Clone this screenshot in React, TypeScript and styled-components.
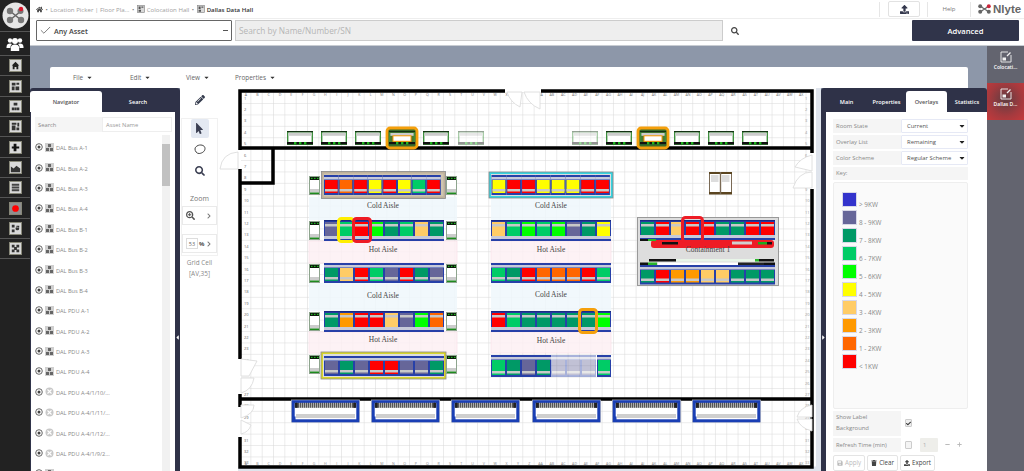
import React from "react";
import styled, { createGlobalStyle } from "styled-components";
import { FaCaretDown, FaCheck, FaHome, FaMousePointer, FaPencilAlt, FaSearch, FaSearchPlus, FaTrash, FaUpload, FaChevronRight, FaPlus, FaMinus, FaCaretLeft, FaCaretRight, FaSave } from "react-icons/fa";
import { Check } from "lucide-react";

const GlobalStyle = createGlobalStyle`
  html, body { margin: 0; padding: 0; background: #fff; }
  * { box-sizing: border-box; }
  body { font-family: "Open Sans", "Liberation Sans", sans-serif; }
`;

const Page = styled.div`
  display: flex;
  width: 1024px;
  height: 471px;
  overflow: hidden;
`;

/* left black strip */
const Sidebar = styled.nav`
  width: 30px;
  flex: none;
  background: #222222;
  display: flex;
  flex-direction: column;
`;
const LogoCell = styled.div`
  height: 32px;
  display: flex;
  align-items: center;
  justify-content: center;
  border-bottom: 1px solid #555;
`;
const PeopleCell = styled.div`
  height: 24px;
  display: flex;
  align-items: center;
  justify-content: center;
  border-bottom: 1px solid #555;
`;
const SideCell = styled.div`
  height: 20.35px;
  display: flex;
  align-items: center;
  justify-content: center;
  border-bottom: 1px solid #555;
`;

const Main = styled.div`
  flex: 1;
  min-width: 0;
  display: flex;
  flex-direction: column;
`;

/* header */
const CrumbBar = styled.div`
  height: 19px;
  display: flex;
  align-items: center;
  padding-left: 6px;
  border-bottom: 1px solid #eee;
  font-size: 6.1px;
  color: #9a9a9a;
`;
const Crumb = styled.span<{ $current?: boolean }>`
  display: inline-flex;
  align-items: center;
  gap: 2px;
  color: ${(p) => (p.$current ? "#333" : "#a0a0a0")};
  font-weight: ${(p) => (p.$current ? 600 : 400)};
`;
const CrumbDot = styled.span`
  margin: 0 2.5px;
  color: #777;
`;
const CrumbRight = styled.div`
  margin-left: auto;
  display: flex;
  align-items: center;
  height: 18px;
`;
const Divider = styled.div`
  width: 1px;
  height: 15px;
  background: #e6e6e6;
`;
const UploadButton = styled.div`
  width: 32px;
  height: 16px;
  margin: 0 7px 0 8px;
  border: 1px solid #e2e2e2;
  border-radius: 2px;
  display: flex;
  align-items: center;
  justify-content: center;
  color: #33374c;
`;
const HelpLink = styled.div`
  width: 42px;
  text-align: center;
  font-size: 6px;
  color: #777;
`;
const NlyteLogo = styled.div`
  width: 53px;
  padding-left: 7px;
  display: flex;
  align-items: center;
  gap: 2px;
  font-family: "Liberation Sans Narrow", "Liberation Sans", sans-serif;
  font-weight: 700;
  font-size: 11.5px;
  color: #666;
`;

const SearchBar = styled.div`
  height: 27px;
  display: flex;
  align-items: center;
  padding: 0 5px 3px 6px;
  border-bottom: 1px solid #c8ccd2;
`;
const AssetBox = styled.div`
  width: 196px;
  height: 21px;
  border: 1px solid #666;
  border-radius: 1px;
  display: flex;
  align-items: center;
  padding: 0 3px 0 2px;
  gap: 2px;
  font-size: 7.2px;
  font-weight: 600;
  color: #444;
`;
const AssetDash = styled.span`
  margin-left: auto;
  width: 5px;
  height: 1.5px;
  background: #555;
`;
const SearchBox = styled.div`
  width: 488px;
  height: 21px;
  margin-left: 3px;
  background: #eeeeee;
  border: 1px solid #ccc;
  display: flex;
  align-items: center;
  padding-left: 3px;
  font-size: 8.3px;
  color: #b5b5b5;
`;
const SearchGlyph = styled.div`
  margin-left: 8px;
  display: flex;
  color: #444;
`;
const AdvancedButton = styled.div`
  margin-left: auto;
  width: 107px;
  height: 21px;
  background: #30344a;
  border-radius: 1px;
  color: #fff;
  font-size: 7.6px;
  font-weight: 600;
  display: flex;
  align-items: center;
  justify-content: center;
`;

/* body */
const Body = styled.div`
  flex: 1;
  min-height: 0;
  display: flex;
  background: #8d97a9;
`;
const Workspace = styled.div`
  flex: 1;
  min-width: 0;
  display: flex;
  flex-direction: column;
  padding-top: 21px;
`;
const MenuBar = styled.div`
  height: 21px;
  margin: 0 19px 0 20px;
  background: #fff;
  border-radius: 2px 2px 0 0;
  display: flex;
  align-items: center;
  font-size: 6.4px;
  color: #666;
`;
const MenuItem = styled.div<{ $width: number }>`
  width: ${(p) => p.$width}px;
  display: flex;
  align-items: center;
  gap: 3px;
  &:first-child { margin-left: 23px; }
`;
const Panels = styled.div`
  flex: 1;
  min-height: 0;
  display: flex;
`;

const DarkPanel = styled.section<{ $width: number }>`
  position: relative;
  flex: none;
  width: ${(p) => p.$width}px;
  height: 100%;
  background: #2f3248;
  border-radius: 3px 3px 0 0;
  padding-top: 3px;
  display: flex;
  flex-direction: column;
`;
const Tabs = styled.div`
  height: 21px;
  flex: none;
  display: flex;
`;
const Tab = styled.div<{ $width: number; $active?: boolean }>`
  width: ${(p) => p.$width}px;
  display: flex;
  align-items: center;
  justify-content: center;
  font-size: 5.6px;
  font-weight: 600;
  border-radius: 3px 3px 0 0;
  color: ${(p) => (p.$active ? "#555" : "#fff")};
  background: ${(p) => (p.$active ? "#fff" : "transparent")};
`;
const CollapseArrow = styled.span<{ $side: "left" | "right" }>`
  position: absolute;
  top: 245px;
  ${(p) => (p.$side === "left" ? "right: 0;" : "left: 0;")}
  width: 5px;
  height: 8px;
  display: flex;
  align-items: center;
  justify-content: center;
  color: #fff;
`;

/* navigator */
const NavBody = styled.div`
  flex: 1;
  min-height: 0;
  margin: 0 5px 0 1px;
  background: #fff;
  padding: 5px 4px 0 4px;
  display: flex;
  flex-direction: column;
`;
const NavSearch = styled.div`
  height: 15px;
  flex: none;
  display: flex;
  font-size: 5.8px;
  color: #888;
  margin-right: -1px;
`;
const NavSearchLabel = styled.div`
  width: 67px;
  background: #f5f5f5;
  display: flex;
  align-items: center;
  padding-left: 3px;
`;
const NavSearchInput = styled.div`
  flex: 1;
  border: 1px solid #eee;
  display: flex;
  align-items: center;
  padding-left: 3px;
  color: #999;
`;
const NavScroller = styled.div`
  flex: 1;
  min-height: 0;
  display: flex;
  margin-top: 3px;
  overflow: hidden;
`;
const NavList = styled.ul`
  flex: 1;
  margin: 0;
  padding: 2px 0 0 0;
  list-style: none;
`;
const NavItem = styled.li`
  height: 20.4px;
  display: flex;
  align-items: center;
  gap: 2px;
  font-size: 5.6px;
  color: #888;
  white-space: nowrap;
`;
const NavItemName = styled.span`
  margin-top: 2px;
`;
const Scrollbar = styled.div`
  width: 8px;
  flex: none;
  background: #f1f1f1;
  margin-right: 1px;
  padding-top: 9px;
`;
const ScrollThumb = styled.div`
  height: 42px;
  background: #c1c1c1;
`;

/* tool column */
const ToolColumn = styled.aside`
  width: 58px;
  flex: none;
  background: #fff;
  display: flex;
  flex-direction: column;
  align-items: flex-start;
  padding: 7px 0 0 1px;
  color: #444;
`;
const PencilWrap = styled.div`
  width: 38px;
  height: 23px;
  display: flex;
  justify-content: center;
  color: #333a4c;
`;
const ToolBox = styled.div`
  width: 37px;
  height: 138px;
  border: 1px solid #f1f1f1;
  display: flex;
  flex-direction: column;
  align-items: center;
`;
const ToolButton = styled.div<{ $active?: boolean }>`
  width: 18px;
  height: ${(p) => (p.$active ? 19 : 22)}px;
  border-radius: 2px;
  background: ${(p) => (p.$active ? "#e4e9f2" : "transparent")};
  display: flex;
  align-items: center;
  justify-content: center;
  color: #3b3f52;
`;
const ZoomLabel = styled.div`
  margin-top: 12px;
  font-size: 7px;
  color: #777;
  line-height: 10px;
`;
const ZoomBox = styled.div`
  width: 35px;
  height: 19px;
  margin-top: 2px;
  border: 1px solid #eaeaea;
  display: flex;
  align-items: center;
  justify-content: space-between;
  padding: 0 4px 0 3px;
  color: #555;
  &:last-child { margin-top: 9px; }
`;
const PercentInput = styled.span`
  width: 12px;
  height: 11px;
  border: 1px solid #ddd;
  font-size: 5.5px;
  display: flex;
  align-items: center;
  justify-content: center;
  color: #666;
`;
const PercentSign = styled.span`
  font-size: 6px;
  font-weight: 700;
  margin-left: 1px;
  margin-right: auto;
`;
const GridInfo = styled.div`
  width: 37px;
  margin-top: 1px;
  text-align: center;
  font-size: 6.4px;
  line-height: 11px;
  color: #888;
`;

/* canvas */
const CanvasArea = styled.main`
  width: 578px;
  flex: none;
  background: #dfe4ec;
`;
const PlanSvg = styled.svg`
  display: block;
  overflow: visible;
`;
const Spacer = styled.div`
  width: 5px;
  flex: none;
  background: #dfe4ec;
`;

/* overlays panel */
const FormBody = styled.div`
  flex: 1;
  min-height: 0;
  margin-left: 5px;
  background: #fff;
  padding: 7px 0 0 7px;
  display: flex;
  flex-direction: column;
  font-size: 5.9px;
  color: #888;
`;
const FormRow = styled.div`
  width: 135px;
  height: 14.5px;
  margin-bottom: 1.5px;
  display: flex;
`;
const FormLabel = styled.div`
  width: 68px;
  background: #f5f5f5;
  display: flex;
  align-items: center;
  padding-left: 3px;
`;
const SelectBox = styled.div`
  flex: 1;
  border: 1px solid #e6e9f5;
  border-radius: 1px;
  background: #fff;
  display: flex;
  align-items: center;
  justify-content: space-between;
  padding: 0 1px 0 5px;
  color: #555;
  white-space: nowrap;
`;
const KeyLabel = styled.div`
  width: 135px;
  height: 14px;
  background: #f5f5f5;
  display: flex;
  align-items: center;
  padding-left: 3px;
`;
const KeyPanel = styled.div`
  width: 135px;
  height: 229px;
  margin-top: 1.5px;
  background: #fafafa;
  border: 1px solid #eee;
  border-radius: 2px;
  padding: 8px 0 0 8px;
`;
const KeyRow = styled.div`
  height: 18px;
  display: flex;
  align-items: flex-end;
  gap: 2px;
  font-size: 6.4px;
  line-height: 9px;
  color: #888;
`;
const Swatch = styled.span<{ $color: string }>`
  width: 15px;
  height: 15px;
  margin-bottom: 2px;
  background: ${(p) => p.$color};
  border: 1px solid #d8d8e8;
`;
const ShowLabelRow = styled.div`
  margin-top: 2px;
  width: 135px;
  height: 25px;
  display: flex;
  align-items: center;
`;
const ShowLabelText = styled.div`
  width: 68px;
  height: 25px;
  background: #f5f5f5;
  padding-left: 3px;
  line-height: 11px;
  font-size: 5.9px;
  display: flex;
  align-items: center;
`;
const CheckBox = styled.span<{ $checked?: boolean }>`
  width: 7.5px;
  height: 7.5px;
  margin-left: 3.5px;
  border: 1px solid #ccc;
  border-radius: 1px;
  background: ${(p) => (p.$checked ? "#eee" : "#f4f4f4")};
  display: flex;
  align-items: center;
  justify-content: center;
  color: #333;
`;
const RefreshRow = styled.div`
  margin-top: 2px;
  width: 135px;
  height: 14.5px;
  display: flex;
  align-items: center;
  color: #888;
`;
const RefreshLabel = styled.div`
  width: 68px;
  height: 100%;
  background: #f5f5f5;
  padding-left: 3px;
  font-size: 5.8px;
  display: flex;
  align-items: center;
`;
const RefreshInput = styled.span`
  width: 18px;
  height: 14px;
  margin-left: 8px;
  background: #eeeeea;
  border-radius: 1px;
  display: flex;
  align-items: center;
  padding-left: 3px;
  color: #aaa;
`;
const StepGlyph = styled.span`
  margin-left: 7px;
  display: flex;
  color: #bbb;
`;
const ButtonRow = styled.div`
  display: flex;
  gap: 2px;
  margin-top: 3px;
`;
const ActionButton = styled.div<{ $disabled?: boolean }>`
  height: 16px;
  padding: 0 3px;
  border: 1px solid #e4e4e4;
  border-radius: 2px;
  display: flex;
  align-items: center;
  gap: 2px;
  font-size: 6.2px;
  color: ${(p) => (p.$disabled ? "#bbb" : "#444")};
`;

/* right rail */
const Rail = styled.aside`
  width: 37px;
  flex: none;
  background: #63646f;
  display: flex;
  flex-direction: column;
`;
const RailItem = styled.div<{ $active?: boolean }>`
  height: 37px;
  display: flex;
  flex-direction: column;
  align-items: center;
  padding-top: 5px;
  gap: 1px;
  color: #fff;
  font-size: 5px;
  font-weight: 600;
  background: ${(p) => (p.$active ? "radial-gradient(circle at 50% 45%, #5f3d42 0%, #a53a3e 60%, #c43a3c 100%)" : "transparent")};
`;

/* ---------- small drawings ---------- */

function SideIcon({ kind }: { kind: number }) {
  const inner: Record<number, React.ReactNode> = {
    0: <path d="M7 3 L11 7 H10 V11 H8 V8.5 H6 V11 H4 V7 H3 Z" fill="#222" />,
    1: <path d="M3 3h4v3h-4zM8 3h3v2h-3zM3 7h3v4h-3zM7 7h4v4h-4z" fill="#333" />,
    2: <path d="M5 3h4v3h-4zM3 8h2.5v3h-2.5zM5.8 8h2.5v3h-2.5zM8.6 8h2.5v3h-2.5z" fill="#333" />,
    3: <path d="M3 3h5v2h-5zM9 3h2v4h-2zM3 6h4v5h-4zM8 8h3v3h-3z" fill="#333" />,
    4: <path d="M5 3h3v3h3v2h-3v3h-3v-3h-2v-2h2z" fill="#111" />,
    5: <path d="M2 6 L5 8 L8 5 L12 8 V12 H2 Z" fill="#333" />,
    6: <path d="M3 3h8v2h-8zM3 6h8v2h-8zM3 9h8v2h-8z" fill="#444" />,
    7: <circle cx="7" cy="7" r="3.6" fill="#ff0000" />,
    8: <path d="M3 3h3v3h-3zM8 4h3v2h-3zM3 8h3v3h-3zM7 7a2 2 0 1 0 4 0a2 2 0 1 0 -4 0z" fill="#333" />,
    9: <path d="M3 3h3v3h-3zM8 3h3v3h-3zM5.5 5.5h3v3h-3zM3 8h3v3h-3zM8 8h3v3h-3z" fill="#333" />,
  };
  return (
    <svg width="13" height="13" viewBox="0 0 14 14">
      <rect x="0.5" y="0.5" width="13" height="13" fill={kind === 7 ? "#8f8f8f" : "#d9d9d9"} stroke="#8a8a7a" />
      {inner[kind]}
    </svg>
  );
}

function HubLogo() {
  return (
    <svg width="27" height="27" viewBox="0 0 27 27">
      <circle cx="13.5" cy="13.5" r="13" fill="#e6e6e6" />
      <path d="M8 9 L19 18 M19 9 L8 18" stroke="#666" strokeWidth="1.6" />
      <circle cx="8" cy="9" r="3.2" fill="#777" />
      <circle cx="18.5" cy="9" r="3" fill="#777" />
      <circle cx="19" cy="7" r="2.2" fill="#d9182d" />
      <circle cx="8" cy="18" r="3.2" fill="#777" />
      <circle cx="19" cy="18" r="3.2" fill="#777" />
    </svg>
  );
}

function PeopleIcon() {
  return (
    <svg width="18" height="14" viewBox="0 0 18 14" fill="#fff">
      <circle cx="4" cy="3.5" r="2.2" />
      <circle cx="14" cy="3.5" r="2.2" />
      <circle cx="9" cy="4" r="3" />
      <path d="M0.5 10c0-2.5 1.5-3.5 3.5-3.5 1 0 1.600.2 2 .6-1 .9-1.500 2-1.500 3.200v.7h-4z" />
      <path d="M17.500 10c0-2.500-1.500-3.500-3.500-3.500-1 0-1.600.2-2 .6 1 .9 1.500 2 1.500 3.200v.7h4z" />
      <path d="M4.800 14v-3c0-2.500 1.800-3.500 4.200-3.500s4.200 1 4.200 3.500v3z" />
    </svg>
  );
}

function NlyteMark() {
  return (
    <svg width="13" height="10" viewBox="0 0 13 10">
      <path d="M2 2 L11 8 M11 2 L2 8" stroke="#666" strokeWidth="1.2" />
      <circle cx="2.200" cy="2.200" r="2" fill="#666" />
      <circle cx="10.800" cy="2.200" r="2" fill="#c9243a" />
      <circle cx="2.200" cy="7.800" r="2" fill="#666" />
      <circle cx="10.800" cy="7.800" r="2" fill="#666" />
    </svg>
  );
}

function FloorIcon({ size = 8 }: { size?: number }) {
  return (
    <svg width={size} height={size} viewBox="0 0 10 10">
      <rect x="0.5" y="0.5" width="9" height="9" fill="#d8d8d8" stroke="#888" strokeWidth="0.8" />
      <path d="M2 6h3v2.500h-3zM5.500 2l2.500 0v1.500l-2.500 0zM2 2h2.500v3h-2.500z" fill="#555" />
    </svg>
  );
}

function RailIcon() {
  return (
    <svg width="12" height="12" viewBox="0 0 12 12" fill="none" stroke="#f2f2f2" strokeWidth="0.9">
      <path d="M8 1H1V11H11V4" />
      <path d="M2.500 9.500H6V6.500H2.500Z" fill="#f2f2f2" stroke="none" />
      <path d="M7 5L10.500 1.500" strokeWidth="1.300" />
    </svg>
  );
}

function NavTypeIcons({ round }: { round?: boolean }) {
  return (
    <>
      <svg width="8" height="8" viewBox="0 0 8 8">
        <circle cx="4" cy="4" r="3.300" fill="none" stroke="#555" strokeWidth="0.9" />
        <circle cx="4" cy="4" r="1.500" fill="#444" />
      </svg>
      {round ? (
        <svg width="9" height="9" viewBox="0 0 9 9">
          <circle cx="4.500" cy="4.500" r="4" fill="#c8c8c8" />
          <path d="M2.500 2.500 L6.500 6.500 M6.500 2.500 L2.500 6.500" stroke="#fff" strokeWidth="1.100" />
        </svg>
      ) : (
        <svg width="9" height="9" viewBox="0 0 9 9">
          <rect width="9" height="9" fill="#d0d0d0" />
          <path d="M3 1h3v3h-3zM1 5h3v3h-3zM5 5h3v3h-3z" fill="#666" />
        </svg>
      )}
    </>
  );
}

function Lasso() {
  return (
    <svg width="12" height="11" viewBox="0 0 12 11" fill="none" stroke="#444" strokeWidth="1">
      <path d="M3 2 C6 0 11 1 11 4.500 C11 8 7 9.500 5 9.500 C2.500 9.500 1 7 1 5 C1 3.500 2 2.700 3 2 Z" />
    </svg>
  );
}

/* ---------- floor plan ---------- */

const RED = "#ff0000";
const ORANGE = "#ff6600";
const AMBER = "#ff9900";
const TAN = "#ffcc66";
const YEL = "#ffff00";
const LIME = "#00ff00";
const MINT = "#00cc66";
const TEAL = "#009966";
const SLATE = "#666699";

type RowProps = { x: number; y: number; colors: string[]; labelsBelow?: boolean; h?: number; w?: number; faded?: number[] };

function CabinetRow({ x, y, colors, labelsBelow, h = 21, w = 15, faded = [] }: RowProps) {
  return (
    <g>
      {colors.map((c, i) => {
        const cx = x + i * w;
        const op = faded.includes(i) ? 0.4 : 1;
        if (labelsBelow) {
          return (
            <g key={i} opacity={op}>
              <rect x={cx} y={y} width={w} height={h} fill="#2740a8" />
              <rect x={cx + 1} y={y + 2} width={w - 2} height={h - 7} fill={c} />
              <rect x={cx + 1} y={y + 4} width={w - 2} height={2.500} fill="#c8c8c8" />
              <rect x={cx} y={y + h - 5} width={w} height={3} fill="#c7cad9" />
              <rect x={cx} y={y} width={w} height={1.200} fill="#1a2a80" />
            </g>
          );
        }
        return (
          <g key={i} opacity={op}>
            <rect x={cx} y={y} width={w} height={h} fill="#2740a8" />
            <rect x={cx} y={y + 2} width={w} height={2.500} fill="#c7cad9" />
            <rect x={cx + 1} y={y + 5} width={w - 2} height={h - 7} fill={c} />
            <rect x={cx + 1} y={y + h - 6} width={w - 2} height={2.500} fill="#c8c8c8" />
          </g>
        );
      })}
    </g>
  );
}

function EndCap({ x, y }: { x: number; y: number }) {
  return (
    <g>
      <rect x={x + 0.500} y={y + 0.500} width={10} height={18} fill="#fff" stroke="#8ea58e" />
      <rect x={x + 1} y={y + 1} width={9} height={3} fill="#0c1a0c" />
      <rect x={x + 2} y={y + 1.800} width={1.500} height={1.200} fill="#1fb51f" />
      <rect x={x + 5} y={y + 1.800} width={1.500} height={1.200} fill="#1fb51f" />
      <rect x={x + 8} y={y + 1.800} width={1.500} height={1.200} fill="#1fb51f" />
      <rect x={x + 1} y={y + 13} width={9} height={3.500} fill="#ccc" />
      <rect x={x + 1} y={y + 16.500} width={9} height={1.500} fill="#1e8a1e" />
    </g>
  );
}

function TopRack({ x, highlight, faded }: { x: number; highlight?: boolean; faded?: boolean }) {
  const y = 131;
  return (
    <g opacity={faded ? 0.45 : 1}>
      {highlight && <rect x={x - 2} y={y - 3} width={30} height={20} rx={3} fill="#3b6b2a" stroke="#f5a00c" strokeWidth={2.800} />}
      <rect x={x + 0.700} y={y + 0.700} width={24.600} height={12.600} fill={highlight ? "#4d7a30" : "#fff"} stroke="#3d8f3d" strokeWidth={1.400} />
      <rect x={x} y={y} width={26} height={1.200} fill="#143214" />
      <rect x={x + 1.400} y={y + 2} width={23.200} height={2.800} fill="#ccc" />
      {highlight && <rect x={x + 4} y={y + 4.800} width={18} height={5.500} fill="#fff" stroke="#ff9900" />}
      <rect x={x} y={y + 11} width={26} height={2.400} fill="#111" />
      {[7, 12, 17].map((d) => (
        <rect key={d} x={x + d} y={y + 11} width={2.400} height={2.400} fill="#1fb51f" />
      ))}
    </g>
  );
}

function Aisle({ x, y, w, h, hot, label, textY }: { x: number; y: number; w: number; h: number; hot?: boolean; label: string; textY: number }) {
  return (
    <g>
      <rect x={x} y={y} width={w} height={h} fill={hot ? "#fdf0f4" : "#eef7fb"} stroke={hot ? "#f9dde4" : "none"} strokeWidth={0.700} opacity={0.85} />
      <text x={x + w / 2} y={textY} textAnchor="middle" fontFamily='"Liberation Serif", serif' fontSize={7.500} fill="#444">
        {label}
      </text>
    </g>
  );
}

function PowerUnit({ x }: { x: number }) {
  return (
    <g>
      <rect x={x - 0.500} y={400} width={68} height={22} fill="#fff" stroke="#bbb" strokeWidth={0.800} />
      <rect x={x + 1.200} y={401.700} width={64.600} height={19.100} fill="#fff" stroke="#1a3fb5" strokeWidth={3} />
      <rect x={x + 3} y={402.800} width={61} height={5} fill="url(#comb)" />
      <rect x={x + 2.800} y={402.800} width={3} height={5} fill="#222" />
      <rect x={x + 61.200} y={402.800} width={3} height={5} fill="#222" />
      <rect x={x + 4} y={414} width={59} height={4} fill="#cfcfcf" />
      <rect x={x} y={416.500} width={3.500} height={3.500} fill="#1a3fb5" />
    </g>
  );
}

function DoorLeaf({ d }: { d: string }) {
  return <path d={d} fill="#fff" stroke="#dcdcdc" strokeWidth={0.900} />;
}

const COLS = Array.from({ length: 50 }, (_, i) =>
  i < 26 ? String.fromCharCode(65 + i) : "A" + String.fromCharCode(39 + i)
);
const ROWS = Array.from({ length: 33 }, (_, i) => i + 1);
const POWER_X = [292, 372, 452, 533, 613, 693];
const TOP_RACKS = [287, 321, 355, 389, 423, 458, 572, 606, 640, 674, 708, 742];
const WALL = "#000";

function FloorPlan() {
  return (
    <PlanSvg width={578} height={383} viewBox="238 88 578 383">
      <defs>
        <pattern id="grid" patternUnits="userSpaceOnUse" x={240} y={92.600} width={11.330} height={11.400}>
          <path d="M11.330 0V11.400M0 11.400H11.330" stroke="#d8d8d8" strokeWidth={1} fill="none" />
        </pattern>
        <pattern id="comb" patternUnits="userSpaceOnUse" width={2} height={5}>
          <rect width={2} height={5} fill="#aaa" />
          <rect width={1} height={5} fill="#555" />
        </pattern>
      </defs>
      <rect x={238} y={88} width={578} height={378.500} fill="#fff" />
      <rect x={241} y={92} width={570} height={373} fill="url(#grid)" />

      {COLS.map((c, i) => (
        <text key={c} x={246 + i * 11.330} y={95.500} textAnchor="middle" fontSize={3.600} fill="#777">{c}</text>
      ))}
      {COLS.map((c, i) => (
        <text key={c} x={246 + i * 11.330} y={465} textAnchor="middle" fontSize={3.600} fill="#888">{c}</text>
      ))}
      {ROWS.map((r) => (
        <g key={r}>
          <text x={244} y={99.500 + (r - 1) * 11.400} fontSize={4} fill="#666">{r}</text>
          <text x={805} y={99.500 + (r - 1) * 11.400} fontSize={4} fill="#999">{r}</text>
        </g>
      ))}

      {/* walls */}
      <path
        d={`M505 91H240V150 M240 169V359 M240 394V407 M240 437V467H812V189 M812 153V91H541 M240 148H812 M240 399H812 M273 148V183H240`}
        fill="none"
        stroke={WALL}
        strokeWidth={3.500}
      />

      {/* doors */}
      <DoorLeaf d="M507 92 Q510 102 520 107 L522 92 Z" />
      <DoorLeaf d="M540 92 V109 Q528 104 524 92 Z" />
      <DoorLeaf d="M238 152 Q222 153 220 169 H238 Z" />
      <DoorLeaf d="M812 155 Q800 158 795 167 L812 171 Z" />
      <DoorLeaf d="M812 172 Q798 172 793 188 H812 Z" />
      <DoorLeaf d="M241 359 L257 361 L249 376 L241 376 Z" />
      <DoorLeaf d="M241 378 L254 378 Q252 390 241 393 Z" />
      <DoorLeaf d="M241 405 H254 Q254 414 241 418 Z" />
      <DoorLeaf d="M241 420 L251 425 Q249 432 241 434 Z" />
      <DoorLeaf d="M812 405 Q800 407 797 417 H812 Z" />
      <DoorLeaf d="M812 419 H797 Q800 428 812 431 Z" />

      {TOP_RACKS.map((x, i) => (
        <TopRack key={x} x={x} highlight={i === 3 || i === 8} faded={i === 5 || i === 6} />
      ))}

      {/* aisles block one */}
      <Aisle x={309} y={197} w={148} h={23} label="Cold Aisle" textY={208} />
      <Aisle x={309} y={241} w={148} h={22} hot label="Hot Aisle" textY={252} />
      <Aisle x={309} y={283} w={148} h={28} label="Cold Aisle" textY={297.500} />
      <Aisle x={309} y={332} w={148} h={21} hot label="Hot Aisle" textY={342} />
      {/* aisles block two */}
      <Aisle x={491} y={197} w={120} h={23} label="Cold Aisle" textY={208} />
      <Aisle x={491} y={241} w={120} h={22} hot label="Hot Aisle" textY={252} />
      <Aisle x={491} y={283} w={120} h={28} label="Cold Aisle" textY={297} />
      <Aisle x={491} y={332} w={120} h={21} hot label="Hot Aisle" textY={343} />

      {/* block one racks */}
      <rect x={322.500} y={172.500} width={122} height={25} fill="#cfc5b0" stroke="#bdb09a" strokeWidth={2} />
      <rect x={321.500} y={171.500} width={124} height={27} fill="none" stroke="#888" strokeWidth={0.800} />
      <CabinetRow x={324} y={175} h={20} w={14.600} colors={[RED, ORANGE, RED, YEL, RED, YEL, MINT, RED]} />
      <CabinetRow x={324} y={220} labelsBelow colors={[SLATE, MINT, RED, LIME, TEAL, MINT, TAN, TEAL]} />
      <CabinetRow x={324} y={263} h={20} colors={[TEAL, TAN, RED, MINT, SLATE, RED, TEAL, SLATE]} />
      <CabinetRow x={324} y={311} labelsBelow colors={[TEAL, AMBER, RED, RED, TAN, SLATE, LIME, ORANGE]} />
      <rect x={322} y={353} width={123} height={25} fill="#ddd" stroke="#d8d41a" strokeWidth={1.800} />
      <rect x={321} y={352} width={125} height={27} fill="none" stroke="#888" strokeWidth={0.800} />
      <CabinetRow x={324} y={356} colors={[SLATE, TEAL, SLATE, RED, RED, SLATE, SLATE, TEAL]} h={20} />
      {[176, 221, 264, 312, 355].map((y) => (
        <g key={y}>
          <EndCap x={309} y={y} />
          <EndCap x={446} y={y} />
        </g>
      ))}
      <rect x={338.500} y={218.500} width={15} height={23} rx={3} fill="none" stroke="#ffee00" strokeWidth={3} />
      <rect x={353.500} y={218.500} width={17} height={23} rx={3} fill="none" stroke="#ee1c25" strokeWidth={3} />

      {/* block two racks */}
      <rect x={490} y={173} width={122} height={24} fill="#ddd" stroke="#35d3e0" strokeWidth={2} />
      <rect x={489} y={172} width={124} height={26} fill="none" stroke="#888" strokeWidth={0.800} />
      <CabinetRow x={491.500} y={175} h={20} w={14.800} colors={[YEL, RED, RED, YEL, YEL, YEL, RED, RED]} />
      <CabinetRow x={491} y={220} labelsBelow colors={[TAN, MINT, LIME, MINT, LIME, SLATE, TEAL, YEL]} />
      <CabinetRow x={491} y={263} h={20} colors={[MINT, TEAL, RED, ORANGE, ORANGE, ORANGE, RED, MINT]} />
      <CabinetRow x={491} y={311} labelsBelow colors={[RED, MINT, TEAL, TEAL, TEAL, TEAL, TEAL, LIME]} />
      <CabinetRow x={491} y={355} h={22} colors={[MINT, TEAL, SLATE, TEAL, SLATE, SLATE, SLATE]} faded={[4, 5, 6]} />
      <CabinetRow x={597} y={355} h={22} w={14} colors={[MINT]} />
      <rect x={579.500} y={309.500} width={17} height={23} rx={3} fill="none" stroke="#f5a00c" strokeWidth={3} />

      {/* small cabinet */}
      <g>
        <rect x={709.500} y={172.500} width={22} height={21} fill="#fff" stroke="#7a6a55" />
        <rect x={709} y={172} width={23} height={2} fill="#5b4520" />
        <rect x={709} y={192} width={23} height={2.500} fill="#5b4520" />
        <rect x={719.800} y={172} width={1.400} height={22} fill="#7a6a55" />
        <rect x={711} y={175} width={7.500} height={7} fill="#ddd" />
        <rect x={722} y={175} width={7.500} height={7} fill="#ddd" />
      </g>

      {/* containment */}
      <rect x={637.500} y={217.500} width={141} height={68} fill="#dddddd" stroke="#999" strokeWidth={1} />
      <CabinetRow x={640} y={220} h={20} colors={[TEAL, RED, TAN, RED, RED, TEAL, TEAL, RED, RED]} labelsBelow />
      <rect x={651} y={240} width={123} height={8} rx={3} fill="#ee1c25" />
      <rect x={640} y={239} width={11} height={2} fill="#111" />
      <rect x={648} y={239} width={8} height={2} fill="#2bb52b" />
      <rect x={662} y={242} width={16} height={2.500} fill="#111" />
      <rect x={732} y={241.500} width={20} height={3} fill="#d0d0d0" />
      <rect x={758} y={242} width={9} height={2.500} fill="#1fa81f" />
      <rect x={767} y={242} width={5} height={2.500} fill="#111" />
      <rect x={682.500} y={217.500} width={20} height={24} rx={3} fill="none" stroke="#ee1c25" strokeWidth={3} />
      <text x={708} y={252} textAnchor="middle" fontFamily='"Liberation Serif", serif' fontSize={7.500} fill="#444">Containment 1</text>
      <rect x={649} y={259} width={27} height={2.500} fill="#111" />
      <rect x={676} y={259} width={79} height={2.500} fill="#e8f5e8" />
      <rect x={755} y={259} width={4} height={2.500} fill="#2bb52b" />
      <rect x={759} y={259} width={15} height={2.500} fill="#111" />
      <rect x={640} y={262.500} width={8} height={2.500} fill="#111" />
      <rect x={648} y={262.500} width={9} height={2.500} fill="#2bb52b" />
      <rect x={658} y={262.500} width={80} height={2.500} fill="#fff" />
      <rect x={738} y={262.500} width={26} height={2.500} fill="#222" />
      <rect x={764} y={262.500} width={11} height={2.500} fill="#111" />
      <CabinetRow x={640} y={265} h={19.500} colors={[TEAL, RED, AMBER, AMBER, TAN, TAN, TEAL, TEAL, TEAL]} />

      {POWER_X.map((x) => (
        <PowerUnit key={x} x={x} />
      ))}
    </PlanSvg>
  );
}

/* ---------- data ---------- */

const NAV_ITEMS: { name: string; round?: boolean }[] = [
  { name: "DAL Bus A-1" },
  { name: "DAL Bus A-2" },
  { name: "DAL Bus A-3" },
  { name: "DAL Bus A-4" },
  { name: "DAL Bus B-1" },
  { name: "DAL Bus B-2" },
  { name: "DAL Bus B-3" },
  { name: "DAL Bus B-4" },
  { name: "DAL PDU A-1" },
  { name: "DAL PDU A-2" },
  { name: "DAL PDU A-3" },
  { name: "DAL PDU A-4" },
  { name: "DAL PDU A-4/1/10/...", round: true },
  { name: "DAL PDU A-4/1/11/...", round: true },
  { name: "DAL PDU A-4/1/12/...", round: true },
  { name: "DAL PDU A-4/1/9/2...", round: true },
  { name: "DAL PDU B-1" },
];

const KEY_ITEMS = [
  ["#3333cc", "> 9KW"],
  ["#666699", "8 - 9KW"],
  ["#009966", "7 - 8KW"],
  ["#00cc66", "6 - 7KW"],
  ["#00ff00", "5 - 6KW"],
  ["#ffff00", "4 - 5KW"],
  ["#ffcc66", "3 - 4KW"],
  ["#ff9900", "2 - 3KW"],
  ["#ff6600", "1 - 2KW"],
  ["#ff0000", "< 1KW"],
];

const MENU = [
  { label: "File", width: 57 },
  { label: "Edit", width: 56 },
  { label: "View", width: 49 },
  { label: "Properties", width: 60 },
];

const FORM = [
  ["Room State", "Current"],
  ["Overlay List", "Remaining"],
  ["Color Scheme", "Regular Scheme"],
];

export default function App() {
  return (
    <Page>
      <GlobalStyle />
      <Sidebar>
        <LogoCell><HubLogo /></LogoCell>
        <PeopleCell><PeopleIcon /></PeopleCell>
        {[0, 1, 2, 3, 4, 5, 6, 7, 8, 9].map((k) => (
          <SideCell key={k}><SideIcon kind={k} /></SideCell>
        ))}
      </Sidebar>
      <Main>
        <CrumbBar>
          <FaHome size={7} color="#444" />
          <CrumbDot>•</CrumbDot>
          <Crumb>Location Picker | Floor Pla...</Crumb>
          <CrumbDot>•</CrumbDot>
          <Crumb><FloorIcon />Colocation Hall</Crumb>
          <CrumbDot>•</CrumbDot>
          <Crumb $current><FloorIcon />Dallas Data Hall</Crumb>
          <CrumbRight>
            <Divider />
            <UploadButton><FaUpload size={9} /></UploadButton>
            <Divider />
            <HelpLink>Help</HelpLink>
            <Divider />
            <NlyteLogo><NlyteMark />Nlyte</NlyteLogo>
          </CrumbRight>
        </CrumbBar>
        <SearchBar>
          <AssetBox>
            <Check size={13} strokeWidth={1.4} color="#555" />
            Any Asset
            <AssetDash />
          </AssetBox>
          <SearchBox>Search by Name/Number/SN</SearchBox>
          <SearchGlyph><FaSearch size={8} /></SearchGlyph>
          <AdvancedButton>Advanced</AdvancedButton>
        </SearchBar>
        <Body>
          <Workspace>
            <MenuBar>
              {MENU.map((m) => (
                <MenuItem key={m.label} $width={m.width}>
                  {m.label}
                  <FaCaretDown size={7} color="#333" />
                </MenuItem>
              ))}
            </MenuBar>
            <Panels>
              <DarkPanel $width={150}>
                <Tabs>
                  <Tab $width={72} $active>Navigator</Tab>
                  <Tab $width={72}>Search</Tab>
                </Tabs>
                <NavBody>
                  <NavSearch>
                    <NavSearchLabel>Search</NavSearchLabel>
                    <NavSearchInput>Asset Name</NavSearchInput>
                  </NavSearch>
                  <NavScroller>
                    <NavList>
                      {NAV_ITEMS.map((item) => (
                        <NavItem key={item.name}>
                          <NavTypeIcons round={item.round} />
                          <NavItemName>{item.name}</NavItemName>
                        </NavItem>
                      ))}
                    </NavList>
                    <Scrollbar><ScrollThumb /></Scrollbar>
                  </NavScroller>
                </NavBody>
                <CollapseArrow $side="left"><FaCaretLeft size={7} /></CollapseArrow>
              </DarkPanel>
              <ToolColumn>
                <PencilWrap><FaPencilAlt size={10} /></PencilWrap>
                <ToolBox>
                  <ToolButton $active><FaMousePointer size={11} /></ToolButton>
                  <ToolButton><Lasso /></ToolButton>
                  <ToolButton><FaSearch size={10} /></ToolButton>
                  <ZoomLabel>Zoom</ZoomLabel>
                  <ZoomBox>
                    <FaSearchPlus size={9} />
                    <FaChevronRight size={6} color="#777" />
                  </ZoomBox>
                  <ZoomBox>
                    <PercentInput>53</PercentInput>
                    <PercentSign>%</PercentSign>
                    <FaChevronRight size={6} color="#777" />
                  </ZoomBox>
                </ToolBox>
                <GridInfo>Grid Cell<br />[AV,35]</GridInfo>
              </ToolColumn>
              <CanvasArea><FloorPlan /></CanvasArea>
              <Spacer />
              <DarkPanel $width={166}>
                <Tabs>
                  <Tab $width={5} />
                  <Tab $width={41}>Main</Tab>
                  <Tab $width={39}>Properties</Tab>
                  <Tab $width={41} $active>Overlays</Tab>
                  <Tab $width={40}>Statistics</Tab>
                </Tabs>
                <FormBody>
                  {FORM.map(([label, value]) => (
                    <FormRow key={label}>
                      <FormLabel>{label}</FormLabel>
                      <SelectBox>{value}<FaCaretDown size={8} color="#222" /></SelectBox>
                    </FormRow>
                  ))}
                  <KeyLabel>Key:</KeyLabel>
                  <KeyPanel>
                    {KEY_ITEMS.map(([color, label]) => (
                      <KeyRow key={label}><Swatch $color={color} />{label}</KeyRow>
                    ))}
                  </KeyPanel>
                  <ShowLabelRow>
                    <ShowLabelText>Show Label<br />Background</ShowLabelText>
                    <CheckBox $checked><FaCheck size={5} /></CheckBox>
                  </ShowLabelRow>
                  <RefreshRow>
                    <RefreshLabel>Refresh Time (min)</RefreshLabel>
                    <CheckBox />
                    <RefreshInput>1</RefreshInput>
                    <StepGlyph><FaMinus size={5} /></StepGlyph>
                    <StepGlyph><FaPlus size={5} /></StepGlyph>
                  </RefreshRow>
                  <ButtonRow>
                    <ActionButton $disabled><FaSave size={6} />Apply</ActionButton>
                    <ActionButton><FaTrash size={6} />Clear</ActionButton>
                    <ActionButton><FaUpload size={6} />Export</ActionButton>
                  </ButtonRow>
                </FormBody>
                <CollapseArrow $side="right"><FaCaretRight size={7} /></CollapseArrow>
              </DarkPanel>
            </Panels>
          </Workspace>
          <Rail>
            <RailItem>
              <RailIcon />
              Colocati...
            </RailItem>
            <RailItem $active>
              <RailIcon />
              Dallas D...
            </RailItem>
          </Rail>
        </Body>
      </Main>
    </Page>
  );
}
